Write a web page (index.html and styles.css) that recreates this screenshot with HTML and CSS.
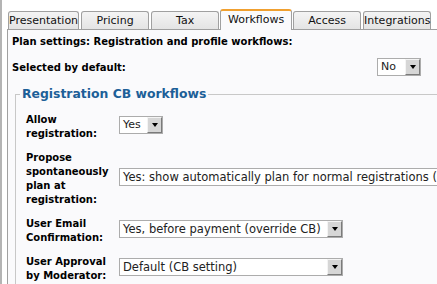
FILE: index.html
```html
<!DOCTYPE html>
<html lang="en">
<head>
    <meta charset="UTF-8">
    <title>Plan settings - Workflows</title>
    <link rel="stylesheet" href="styles.css">
</head>
<body>
    <div class="page">
        <ul class="tabs">
            <li class="tab">Presentation</li>
            <li class="tab">Pricing</li>
            <li class="tab">Tax</li>
            <li class="tab active">Workflows</li>
            <li class="tab">Access</li>
            <li class="tab">Integrations</li>
        </ul>

        <div class="panel">
            <div class="heading">Plan settings: Registration and profile workflows:</div>

            <div class="setting-row">
                <span class="setting-label">Selected by default:</span>
                <span class="select select-short">
                    <span class="select-value">No</span>
                    <span class="select-arrow"></span>
                </span>
            </div>

            <fieldset class="group">
                <legend>Registration CB workflows</legend>

                <div class="field">
                    <div class="field-label">Allow registration:</div>
                    <span class="select select-short">
                        <span class="select-value">Yes</span>
                        <span class="select-arrow"></span>
                    </span>
                </div>

                <div class="field">
                    <div class="field-label">Propose spontaneously plan at registration:</div>
                    <span class="select select-long">
                        <span class="select-value">Yes: show automatically plan for normal registrations (r</span>
                    </span>
                </div>

                <div class="field">
                    <div class="field-label">User Email Confirmation:</div>
                    <span class="select select-medium">
                        <span class="select-value">Yes, before payment (override CB)</span>
                        <span class="select-arrow"></span>
                    </span>
                </div>

                <div class="field">
                    <div class="field-label">User Approval by Moderator:</div>
                    <span class="select select-medium">
                        <span class="select-value">Default (CB setting)</span>
                        <span class="select-arrow"></span>
                    </span>
                </div>
            </fieldset>
        </div>
    </div>
</body>
</html>
```

FILE: styles.css
```css
body {
    margin: 0;
    background: #fff;
    color: #000;
    font-family: "DejaVu Sans", Verdana, sans-serif;
    overflow: hidden;
}

.page {
    width: 480px;
    height: 284px;
    border-left: 2px solid #b4b4b4;
    padding: 9px 0 0 5px;
    box-sizing: border-box;
    overflow: hidden;
}

/* Tab row */
.tabs {
    list-style: none;
    margin: 0 0 0 1px;
    padding: 0;
    display: flex;
    align-items: flex-end;
    position: relative;
    z-index: 1;
}

.tab {
    box-sizing: border-box;
    min-width: 68px;
    height: 18px;
    margin-right: 2px;
    border: 1px solid #a0a0a0;
    border-bottom: none;
    border-radius: 3px 3px 0 0;
    background: linear-gradient(#f4f4f4, #e4e4e4);
    font-size: 11px;
    line-height: 17px;
    text-align: center;
    white-space: nowrap;
    color: #111;
}

.tab.active {
    min-width: 72px;
    height: 21px;
    margin: 0 1px -1px -1px;
    border-top: 2px solid #f0a030;
    background: #fafafc;
    line-height: 18px;
}

/* Panel */
.panel {
    width: 460px;
    border: 1px solid #a0a0a0;
    background: #fafafc;
    padding: 5px 4px 20px;
}

.heading {
    font-size: 10px;
    font-weight: bold;
    line-height: 14px;
}

.setting-row {
    width: 409px;
    height: 18px;
    margin-top: 9px;
    display: flex;
    align-items: center;
    justify-content: space-between;
}

.setting-label {
    font-size: 10px;
    font-weight: bold;
}

/* Fieldset */
.group {
    margin: 10px 0 0 3px;
    padding: 6px 0 0 10px;
    border: 1px solid #c8c8c8;
    border-right: none;
    border-bottom: none;
}

.group legend {
    margin-left: -6px;
    padding: 0 2px;
    font-size: 12.4px;
    font-weight: bold;
    line-height: 16px;
    color: #1d5f98;
}

.field {
    display: flex;
    align-items: center;
    padding: 5px 0;
}

.field-label {
    flex: none;
    width: 86px;
    margin-right: 7px;
    font-size: 10px;
    font-weight: bold;
    line-height: 14px;
}

/* Drop-down boxes */
.select {
    box-sizing: border-box;
    display: inline-flex;
    height: 18px;
    border: 1px solid #acacac;
    background: #fff;
    overflow: hidden;
}

.field .select { margin-bottom: 4px; }

.select-value {
    flex: 1;
    padding: 0 3px;
    font-size: 11.5px;
    line-height: 16px;
    color: #222;
    white-space: nowrap;
    overflow: hidden;
}

.select-short .select-value { font-size: 11px; }

.select-arrow {
    box-sizing: border-box;
    flex: none;
    width: 15px;
    height: 16px;
    border: 1px solid;
    border-color: #f4f4f4 #7a7a7a #7a7a7a #f4f4f4;
    background: #d6d6d6;
    display: flex;
    align-items: center;
    justify-content: center;
}

.select-arrow::after {
    content: "";
    border-left: 3.5px solid transparent;
    border-right: 3.5px solid transparent;
    border-top: 4px solid #000;
}

.select-short { width: 44px; }
.select-medium { width: 224px; }
.select-long { width: 330px; }
```
